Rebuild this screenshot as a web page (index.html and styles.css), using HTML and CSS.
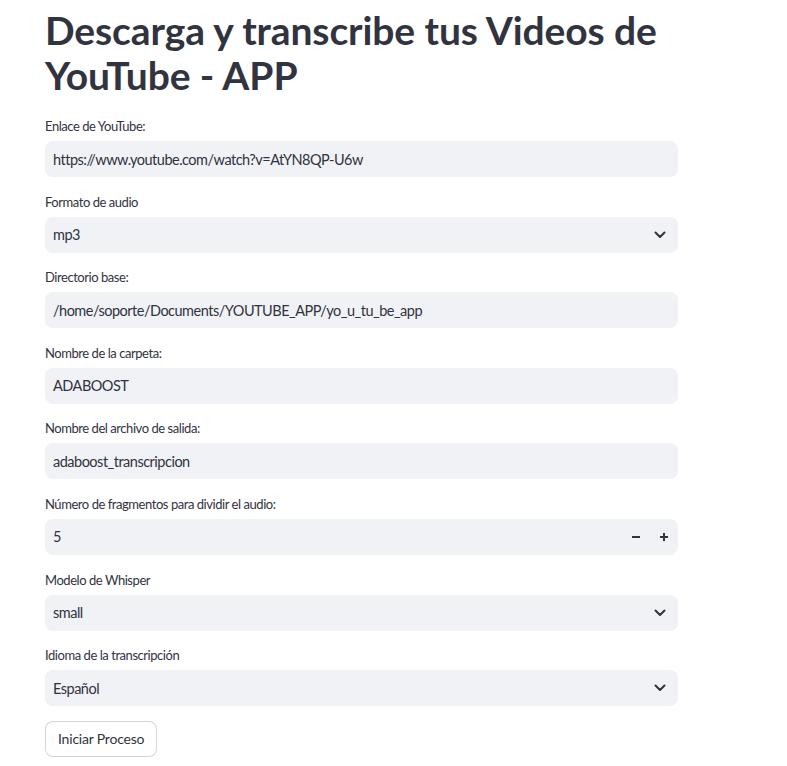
FILE: index.html
```html
<!DOCTYPE html>
<html lang="es">
<head>
<meta charset="utf-8">
<title>Descarga y transcribe</title>
<link rel="stylesheet" href="styles.css">
</head>
<body>
<main class="app">
  <h1 class="title">Descarga y transcribe tus Videos de YouTube - APP</h1>

  <div class="field">
    <label class="label">Enlace de YouTube:</label>
    <div class="box"><span class="value">https://www.youtube.com/watch?v=AtYN8QP-U6w</span></div>
  </div>

  <div class="field">
    <label class="label">Formato de audio</label>
    <div class="box select"><span class="value">mp3</span>
      <svg class="chev" width="12" height="8" viewBox="0 0 12 8"><path d="M1.5 1.5 L6 6 L10.5 1.5" fill="none" stroke="#31333f" stroke-width="2" stroke-linecap="round" stroke-linejoin="round"/></svg>
    </div>
  </div>

  <div class="field">
    <label class="label">Directorio base:</label>
    <div class="box"><span class="value">/home/soporte/Documents/YOUTUBE_APP/yo_u_tu_be_app</span></div>
  </div>

  <div class="field">
    <label class="label">Nombre de la carpeta:</label>
    <div class="box"><span class="value">ADABOOST</span></div>
  </div>

  <div class="field">
    <label class="label">Nombre del archivo de salida:</label>
    <div class="box"><span class="value">adaboost_transcripcion</span></div>
  </div>

  <div class="field">
    <label class="label">Número de fragmentos para dividir el audio:</label>
    <div class="box number"><span class="value num">5</span>
      <span class="steps">
        <span class="step"><svg width="10" height="10" viewBox="0 0 10 10"><path d="M1 5 H9" stroke="#31333f" stroke-width="2"/></svg></span>
        <span class="step"><svg width="10" height="10" viewBox="0 0 10 10"><path d="M1 5 H9 M5 1 V9" stroke="#31333f" stroke-width="2"/></svg></span>
      </span>
    </div>
  </div>

  <div class="field">
    <label class="label">Modelo de Whisper</label>
    <div class="box select"><span class="value">small</span>
      <svg class="chev" width="12" height="8" viewBox="0 0 12 8"><path d="M1.5 1.5 L6 6 L10.5 1.5" fill="none" stroke="#31333f" stroke-width="2" stroke-linecap="round" stroke-linejoin="round"/></svg>
    </div>
  </div>

  <div class="field">
    <label class="label">Idioma de la transcripción</label>
    <div class="box select"><span class="value">Español</span>
      <svg class="chev" width="12" height="8" viewBox="0 0 12 8"><path d="M1.5 1.5 L6 6 L10.5 1.5" fill="none" stroke="#31333f" stroke-width="2" stroke-linecap="round" stroke-linejoin="round"/></svg>
    </div>
  </div>

  <button class="btn">Iniciar Proceso</button>
</main>
</body>
</html>
```
FILE: styles.css
```css
html, body {
  margin: 0;
  padding: 0;
  background: #ffffff;
}
body {
  font-family: "Lato", "Open Sans", sans-serif;
  color: #31333f;
}
.app {
  width: 633px;
  padding: 0 0 0 45px;
}
.title {
  margin: 0;
  box-sizing: border-box;
  padding: 8px 0 0 0;
  font-size: 39px;
  line-height: 45px;
  font-weight: 700;
  letter-spacing: -0.1px;
  color: #31333f;
  height: 116px;
}
.field {
  display: flex;
  flex-direction: column;
  gap: 5px;
  margin-bottom: 14.6px;
}
.label {
  font-size: 13px;
  line-height: 20px;
  height: 20px;
  letter-spacing: -0.45px;
  color: #31333f;
}
.box {
  height: 36px;
  background: #f0f2f6;
  border-radius: 8px;
  display: flex;
  align-items: center;
  padding: 0 10px 0 8px;
  box-sizing: border-box;
}
.value {
  font-size: 14.5px;
  letter-spacing: -0.5px;
  flex: 1;
}
.chev {
  margin-right: 2px;
}
.steps {
  display: flex;
  gap: 8px;
  margin-right: -6px;
}
.step {
  width: 20px;
  height: 30px;
  display: flex;
  align-items: center;
  justify-content: center;
}
.btn {
  font-family: inherit;
  font-size: 14px;
  letter-spacing: -0.2px;
  color: #31333f;
  background: #ffffff;
  border: 1px solid rgba(49, 51, 63, 0.2);
  border-radius: 8px;
  height: 36px;
  padding: 0 12px;
  cursor: pointer;
}
```
